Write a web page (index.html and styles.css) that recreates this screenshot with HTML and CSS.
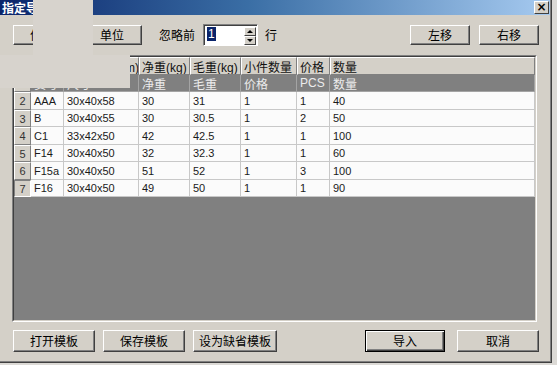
FILE: index.html
```html
<!DOCTYPE html>
<html>
<head>
<meta charset="utf-8">
<link rel="stylesheet" href="styles.css">
</head>
<body>
<div class="window">
  <div class="window-inner">
    <div class="titlebar">
      <span class="title">指定导入格式</span>
      <span class="close">×</span>
    </div>
    <div class="toolbar">
      <button class="btn w58">件号</button>
      <button class="btn w60 ml11">单位</button>
      <span class="label">忽略前</span>
      <div class="spin">
        <span class="sel">1</span>
        <div class="spin-btns">
          <span class="spin-btn"><i class="tri-up"></i></span>
          <span class="spin-btn"><i class="tri-down"></i></span>
        </div>
      </div>
      <span class="label2">行</span>
      <button class="btn w60 ml-auto">左移</button>
      <button class="btn w60 ml9">右移</button>
    </div>
    <div class="frame">
      <div class="frame-inner">
        <div class="grid">
          <div class="rn"></div><div class="hd">货号</div><div class="hd">外箱尺寸(cm)</div><div class="hd">净重(kg)</div><div class="hd">毛重(kg)</div><div class="hd">小件数量</div><div class="hd">价格</div><div class="hd">数量</div>
          <div class="rn"></div><div class="hd2">货号</div><div class="hd2">尺寸</div><div class="hd2">净重</div><div class="hd2">毛重</div><div class="hd2">价格</div><div class="hd2">PCS</div><div class="hd2">数量</div>
          <div class="rn">2</div><div class="c">AAA</div><div class="c">30x40x58</div><div class="c">30</div><div class="c">31</div><div class="c">1</div><div class="c">1</div><div class="c">40</div>
          <div class="rn">3</div><div class="c">B</div><div class="c">30x40x55</div><div class="c">30</div><div class="c">30.5</div><div class="c">1</div><div class="c">2</div><div class="c">50</div>
          <div class="rn">4</div><div class="c">C1</div><div class="c">33x42x50</div><div class="c">42</div><div class="c">42.5</div><div class="c">1</div><div class="c">1</div><div class="c">100</div>
          <div class="rn">5</div><div class="c">F14</div><div class="c">30x40x50</div><div class="c">32</div><div class="c">32.3</div><div class="c">1</div><div class="c">1</div><div class="c">60</div>
          <div class="rn">6</div><div class="c">F15a</div><div class="c">30x40x50</div><div class="c">51</div><div class="c">52</div><div class="c">1</div><div class="c">3</div><div class="c">100</div>
          <div class="rn current">7</div><div class="c">F16</div><div class="c">30x40x50</div><div class="c">49</div><div class="c">50</div><div class="c">1</div><div class="c">1</div><div class="c">90</div>
        </div>
      </div>
    </div>
    <div class="footer">
      <button class="btn w82">打开模板</button>
      <button class="btn w82 ml8">保存模板</button>
      <button class="btn w84 ml8">设为缺省模板</button>
      <button class="btn w80 ml88 default">导入</button>
      <button class="btn w82 ml12">取消</button>
    </div>
  </div>
  <div class="mask mask-a"></div>
  <div class="mask mask-b"></div>
</div>
</body>
</html>
```

FILE: styles.css
```css
* { box-sizing: border-box; }
html, body { margin: 0; padding: 0; }
body {
  background: #dcdad6;
  width: 557px;
  height: 365px;
  overflow: hidden;
  font-family: "Liberation Sans", "Noto Sans CJK SC", sans-serif;
  font-size: 12px;
  color: #000;
}
.window {
  position: relative;
  width: 552px;
  height: 363px;
  border-right: 1px solid #404040;
  border-bottom: 1px solid #404040;
  background: #d4d0c8;
}
.window-inner {
  height: 100%;
  border-right: 1px solid #808080;
  border-bottom: 1px solid #808080;
  display: flex;
  flex-direction: column;
}
.titlebar {
  height: 15px;
  background: linear-gradient(to right, #0a246a 0%, #3a6ea5 45%, #a6caf0 100%);
  display: flex;
  align-items: center;
  justify-content: space-between;
  padding: 0 1px 0 2px;
}
.title {
  color: #fff;
  font-weight: bold;
  font-size: 12px;
  line-height: 14px;
  font-family: "Noto Sans CJK SC", sans-serif;
}
.close {
  width: 15px;
  height: 13px;
  background: #d4d0c8;
  border-top: 1px solid #fff;
  border-left: 1px solid #fff;
  border-right: 1px solid #404040;
  border-bottom: 1px solid #404040;
  font-family: "DejaVu Sans", sans-serif;
  font-weight: bold;
  font-size: 12px;
  line-height: 10px;
  text-align: center;
  color: #000;
}
.btn {
  height: 20px;
  padding: 0;
  margin: 0;
  background: #d4d0c8;
  border-top: 1px solid #fff;
  border-left: 1px solid #fff;
  border-right: 1px solid #404040;
  border-bottom: 1px solid #404040;
  box-shadow: inset -1px -1px 0 #808080;
  font-family: "Noto Sans CJK SC", sans-serif;
  font-size: 12px;
  line-height: 16px;
  color: #000;
  text-align: center;
}
.btn.default {
  border: 1px solid #000;
  box-shadow: inset 1px 1px 0 #fff, inset -1px -1px 0 #404040, inset -2px -2px 0 #808080;
}
.w58 { width: 58px; }
.w60 { width: 60px; }
.w80 { width: 80px; }
.w82 { width: 82px; }
.w84 { width: 84px; }
.ml8 { margin-left: 8px; }
.ml9 { margin-left: 9px; }
.ml11 { margin-left: 11px; }
.ml12 { margin-left: 12px; }
.ml88 { margin-left: 88px; }
.ml-auto { margin-left: auto; }

.toolbar {
  margin-top: 10px;
  height: 20px;
  padding: 0 11px 0 13px;
  display: flex;
  align-items: center;
}
.label {
  margin-left: 17px;
  font-family: "Noto Sans CJK SC", sans-serif;
  font-size: 12px;
  line-height: 20px;
}
.label2 {
  margin-left: 7px;
  font-family: "Noto Sans CJK SC", sans-serif;
  font-size: 12px;
  line-height: 20px;
}
.spin {
  margin-left: 8px;
  width: 55px;
  height: 22px;
  flex: none;
  background: #fff;
  border-top: 1px solid #808080;
  border-left: 1px solid #808080;
  border-right: 1px solid #fff;
  border-bottom: 1px solid #fff;
  box-shadow: inset 1px 1px 0 #404040;
  display: flex;
  align-items: flex-start;
  padding: 2px 1px 0 3px;
}
.sel {
  background: #0a246a;
  color: #fff;
  font-size: 12px;
  line-height: 14px;
  height: 14px;
  padding: 0 1px;
}
.spin-btns {
  margin-left: auto;
  width: 12px;
  height: 18px;
  display: flex;
  flex-direction: column;
}
.spin-btn {
  height: 9px;
  background: #d4d0c8;
  border-top: 1px solid #fff;
  border-left: 1px solid #fff;
  border-right: 1px solid #404040;
  border-bottom: 1px solid #404040;
  display: flex;
  align-items: center;
  justify-content: center;
}
.tri-up {
  width: 0; height: 0;
  border-left: 3px solid transparent;
  border-right: 3px solid transparent;
  border-bottom: 3px solid #000;
}
.tri-down {
  width: 0; height: 0;
  border-left: 3px solid transparent;
  border-right: 3px solid transparent;
  border-top: 3px solid #000;
}

.frame {
  margin-top: 10px;
  margin-left: 12px;
  width: 525px;
  height: 267px;
  border-top: 1px solid #808080;
  border-left: 1px solid #808080;
  border-right: 1px solid #fff;
  border-bottom: 1px solid #fff;
}
.frame-inner {
  height: 100%;
  border-top: 1px solid #404040;
  border-left: 1px solid #404040;
  border-right: 1px solid #d4d0c8;
  border-bottom: 1px solid #d4d0c8;
  background: #808080;
}
.grid {
  display: grid;
  grid-template-columns: 17px 33px 75px 51px 51px 56px 33px 205px;
  grid-template-rows: 18px 17px 18px 17px 18px 17px 18px 17px;
}
.grid > div {
  display: flex;
  align-items: center;
  white-space: nowrap;
  overflow: hidden;
}
.rn {
  background: #d4d0c8;
  border-top: 1px solid #fff;
  border-left: 1px solid #fff;
  border-right: 1px solid #808080;
  border-bottom: 1px solid #808080;
  justify-content: center;
  font-size: 11px;
  color: #333;
}
.rn.current {
  border-top: 1px solid #808080;
  border-left: 1px solid #808080;
  border-right: 1px solid #fff;
  border-bottom: 1px solid #fff;
}
.hd {
  background: #d4d0c8;
  border-top: 1px solid #fff;
  border-left: 1px solid #fff;
  border-right: 1px solid #808080;
  border-bottom: 1px solid #808080;
  padding-left: 2px;
  font-size: 12px;
  color: #111;
}
.hd2 {
  background: #808080;
  border-right: 1px solid #a4a4a4;
  border-bottom: 1px solid #a4a4a4;
  padding-left: 3px;
  font-size: 12px;
  color: #ececec;
}
.c {
  background: #fbfbfb;
  border-right: 1px solid #c8c8c8;
  border-bottom: 1px solid #c8c8c8;
  padding-left: 3px;
  font-size: 11px;
  color: #1a1a1a;
}

.footer {
  margin-top: 8px;
  height: 22px;
  padding-left: 13px;
  display: flex;
}
.footer .btn { height: 22px; line-height: 18px; }

.mask {
  position: absolute;
  background: #d7d3cd;
}
.mask-a { left: 33px; top: 0; width: 60px; height: 55px; }
.mask-b { left: 0; top: 55px; width: 130px; height: 33px; }
```
